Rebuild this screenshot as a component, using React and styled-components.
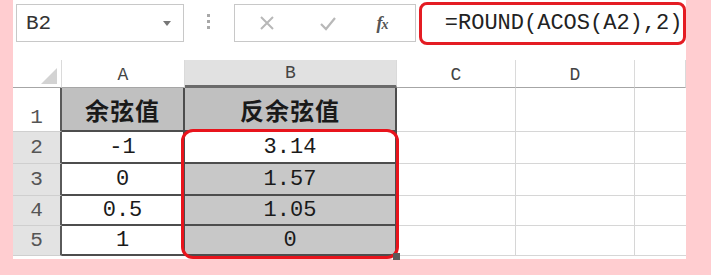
import React from 'react';
import styled, { createGlobalStyle } from 'styled-components';

const GlobalStyle = createGlobalStyle`
  html, body {
    margin: 0;
    padding: 0;
    background: #ffcdd0;
  }
  body {
    font-family: "Liberation Mono", "Noto Sans CJK SC", monospace;
  }
`;

const Page = styled.div`
  width: 711px;
  height: 275px;
  padding-left: 13px;
  box-sizing: border-box;
  background: #ffcdd0;
`;

const Sheet = styled.div`
  width: 673px;
  height: 259px;
  background: #fff;
  display: flex;
  flex-direction: column;
`;

const FormulaBar = styled.div`
  display: flex;
  align-items: flex-start;
  height: 60px;
  padding-left: 3px;
  box-sizing: border-box;
`;

const NameBox = styled.div`
  margin-top: 4px;
  width: 168px;
  height: 38px;
  box-sizing: border-box;
  border: 1px solid #c8c8c8;
  display: flex;
  align-items: center;
  justify-content: space-between;
  padding: 0 12px 0 9px;
  font-size: 21px;
  color: #333;
`;

const DropArrow = styled.span`
  width: 0;
  height: 0;
  border-left: 4px solid transparent;
  border-right: 4px solid transparent;
  border-top: 5px solid #777;
`;

const Grip = styled.div`
  width: 51px;
  padding-top: 14px;
  display: flex;
  flex-direction: column;
  align-items: center;
  gap: 3px;
`;

const GripDot = styled.span`
  width: 3px;
  height: 3px;
  background: #a8a8a8;
`;

const ButtonsBox = styled.div`
  margin-top: 4px;
  width: 182px;
  height: 38px;
  box-sizing: border-box;
  border: 1px solid #c8c8c8;
  display: grid;
  grid-template-columns: 64px 58px 1fr;
  align-items: center;
  justify-items: center;
  padding-right: 8px;
`;

const FxLabel = styled.span`
  font-family: "Liberation Serif", serif;
  font-style: italic;
  font-weight: bold;
  font-size: 18px;
  color: #555;
  letter-spacing: -1px;

  small {
    font-size: 14px;
  }
`;

const FormulaBox = styled.div`
  margin-left: 3px;
  margin-top: 2px;
  width: 268px;
  height: 43px;
  box-sizing: border-box;
  border: 3px solid #e41c23;
  border-radius: 8px;
  padding-left: 23px;
  display: flex;
  align-items: center;
  font-size: 22px;
  color: #222;
  white-space: nowrap;
`;

const Grid = styled.div`
  position: relative;
  display: grid;
  grid-template-columns: 49px 123px 212px 119px 119px 1fr;
  grid-template-rows: 28px 44px 32px 32px 30px 30px;
`;

const Corner = styled.div`
  box-sizing: border-box;
  border-right: 1px solid #dadada;
  border-bottom: 1px solid #a6a6a6;
  display: flex;
  align-items: flex-end;
  justify-content: flex-end;
  padding: 0 4px 3px 0;

  &::after {
    content: "";
    width: 0;
    height: 0;
    border-left: 16px solid transparent;
    border-bottom: 16px solid #d3d3d3;
  }
`;

const ColHeader = styled.div`
  box-sizing: border-box;
  background: ${p => (p.$active ? '#e1e1e1' : '#fff')};
  border-right: 1px solid #dadada;
  border-bottom: ${p => (p.$active ? '3px solid #6b6b6b' : '1px solid #a6a6a6')};
  display: flex;
  align-items: flex-end;
  justify-content: center;
  padding-bottom: 2px;
  font-size: 18px;
  color: #444;
`;

const RowHeader = styled.div`
  box-sizing: border-box;
  background: ${p => (p.$active ? '#e3e3e3' : '#fff')};
  border-right: 2px solid #5a5a5a;
  border-bottom: 1px solid #cfcfcf;
  display: flex;
  align-items: ${p => (p.$tall ? 'flex-end' : 'center')};
  justify-content: center;
  padding-bottom: ${p => (p.$tall ? '2px' : '0')};
  font-size: 21px;
  color: #555;
`;

const DataCell = styled.div`
  box-sizing: border-box;
  background: ${p => p.$fill || '#fff'};
  border-right: 2px solid #4d4d4d;
  border-bottom: 2px solid #4d4d4d;
  display: flex;
  align-items: center;
  justify-content: center;
  font-size: ${p => (p.$title ? '24px' : '22px')};
  font-weight: ${p => (p.$title ? 'bold' : 'normal')};
  font-family: ${p => (p.$title ? '"Noto Sans CJK SC", sans-serif' : '"Liberation Mono", monospace')};
  letter-spacing: ${p => (p.$title ? '1px' : '0')};
  color: #1a1a1a;
`;

const EmptyCell = styled.div`
  box-sizing: border-box;
  border-right: ${p => (p.$last ? 'none' : '1px solid #d6d6d6')};
  border-bottom: 1px solid #d6d6d6;
`;

const Highlight = styled.div`
  position: absolute;
  left: 168px;
  top: 69px;
  width: 218px;
  height: 130px;
  box-sizing: border-box;
  border: 3px solid #e8141c;
  border-radius: 12px;
  pointer-events: none;
`;

const FillHandle = styled.div`
  position: absolute;
  left: 380px;
  top: 193px;
  width: 7px;
  height: 7px;
  background: #5a5a5a;
`;

const rows = [
  { n: 1, a: '余弦值', b: '反余弦值', title: true },
  { n: 2, a: '-1', b: '3.14' },
  { n: 3, a: '0', b: '1.57' },
  { n: 4, a: '0.5', b: '1.05' },
  { n: 5, a: '1', b: '0' },
];

export default function App() {
  return (
    <>
      <GlobalStyle />
      <Page>
        <Sheet>
          <FormulaBar>
            <NameBox>
              <span>B2</span>
              <DropArrow />
            </NameBox>
            <Grip>
              <GripDot />
              <GripDot />
              <GripDot />
            </Grip>
            <ButtonsBox>
              <svg width="16" height="16" viewBox="0 0 16 16">
                <path d="M2 2 L14 14 M14 2 L2 14" stroke="#b8b8b8" strokeWidth="2" fill="none" />
              </svg>
              <svg width="18" height="16" viewBox="0 0 18 16">
                <path d="M2 9 L7 14 L16 3" stroke="#b8b8b8" strokeWidth="2.2" fill="none" />
              </svg>
              <FxLabel>
                f<small>x</small>
              </FxLabel>
            </ButtonsBox>
            <FormulaBox>=ROUND(ACOS(A2),2)</FormulaBox>
          </FormulaBar>

          <Grid>
            <Corner />
            <ColHeader>A</ColHeader>
            <ColHeader $active>B</ColHeader>
            <ColHeader>C</ColHeader>
            <ColHeader>D</ColHeader>
            <ColHeader />

            {rows.map(r => (
              <React.Fragment key={r.n}>
                <RowHeader $active={r.n > 1} $tall={r.title}>{r.n}</RowHeader>
                <DataCell $title={r.title} $fill={r.title ? '#c0c0c0' : undefined}>
                  {r.a}
                </DataCell>
                <DataCell
                  $title={r.title}
                  $fill={r.title ? '#c0c0c0' : r.n > 2 ? '#c8c8c8' : undefined}
                >
                  {r.b}
                </DataCell>
                <EmptyCell />
                <EmptyCell />
                <EmptyCell $last />
              </React.Fragment>
            ))}

            <Highlight />
            <FillHandle />
          </Grid>
        </Sheet>
      </Page>
    </>
  );
}
